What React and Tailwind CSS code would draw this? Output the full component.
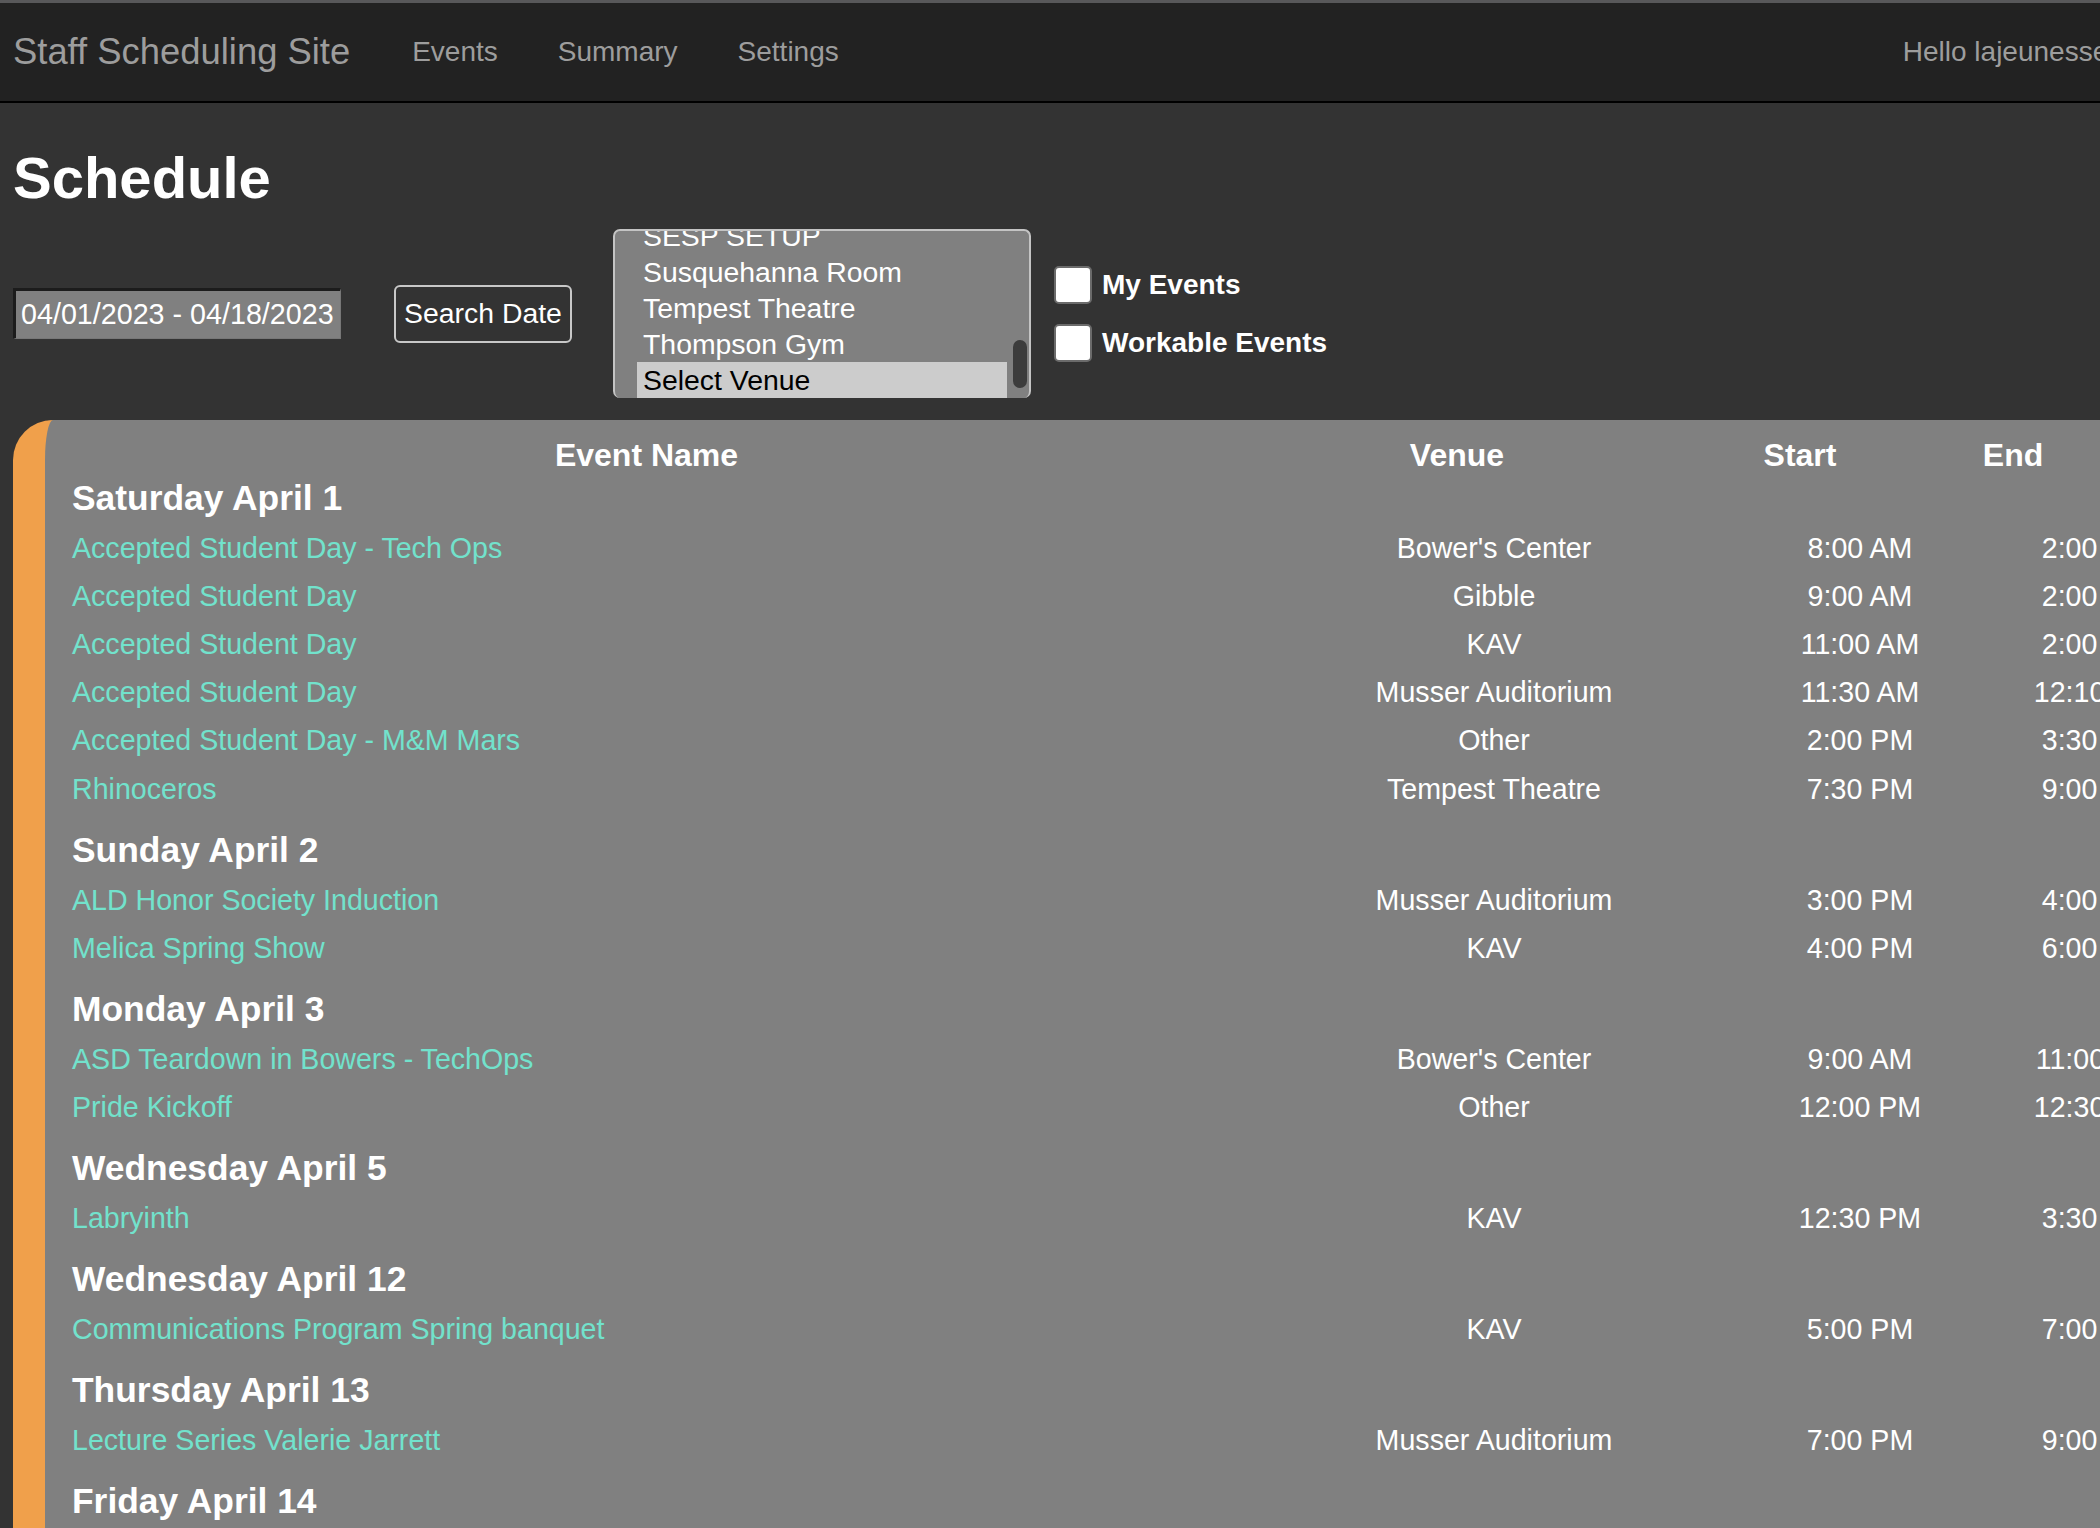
import React from "react";

const days = [
  {
    day: "Saturday April 1",
    events: [
      ["Accepted Student Day - Tech Ops", "Bower's Center", "8:00 AM", "2:00 PM"],
      ["Accepted Student Day", "Gibble", "9:00 AM", "2:00 PM"],
      ["Accepted Student Day", "KAV", "11:00 AM", "2:00 PM"],
      ["Accepted Student Day", "Musser Auditorium", "11:30 AM", "12:10 PM"],
      ["Accepted Student Day - M&M Mars", "Other", "2:00 PM", "3:30 PM"],
      ["Rhinoceros", "Tempest Theatre", "7:30 PM", "9:00 PM"],
    ],
  },
  {
    day: "Sunday April 2",
    events: [
      ["ALD Honor Society Induction", "Musser Auditorium", "3:00 PM", "4:00 PM"],
      ["Melica Spring Show", "KAV", "4:00 PM", "6:00 PM"],
    ],
  },
  {
    day: "Monday April 3",
    events: [
      ["ASD Teardown in Bowers - TechOps", "Bower's Center", "9:00 AM", "11:00 AM"],
      ["Pride Kickoff", "Other", "12:00 PM", "12:30 PM"],
    ],
  },
  {
    day: "Wednesday April 5",
    events: [["Labryinth", "KAV", "12:30 PM", "3:30 PM"]],
  },
  {
    day: "Wednesday April 12",
    events: [["Communications Program Spring banquet", "KAV", "5:00 PM", "7:00 PM"]],
  },
  {
    day: "Thursday April 13",
    events: [["Lecture Series Valerie Jarrett", "Musser Auditorium", "7:00 PM", "9:00 PM"]],
  },
  { day: "Friday April 14", events: [] },
];

const venues = ["SESP SETUP", "Susquehanna Room", "Tempest Theatre", "Thompson Gym", "Select Venue"];

export default function App() {
  return (
    <div className="w-[2100px] h-[1528px] overflow-hidden bg-[#333333] font-['Liberation_Sans',Arial,sans-serif] text-white">
      <div className="w-[2200px]">
        {/* Navbar */}
        <nav className="h-[103px] bg-[#222222] border-t-[3px] border-t-[#58585a] border-b-2 border-b-black flex items-center pl-[13px]">
          <span className="text-[36.4px] text-[#9d9d9d] leading-none">Staff Scheduling Site</span>
          <div className="flex ml-[62px] gap-[60px] text-[28px] text-[#9d9d9d] leading-none">
            <span>Events</span>
            <span>Summary</span>
            <span>Settings</span>
          </div>
          <span className="ml-auto mr-[84px] text-[28px] text-[#9d9d9d] leading-none">Hello lajeunesse!</span>
        </nav>

        {/* Page header */}
        <div className="pl-[13px]">
          <h1 className="mt-[42px] text-[58px] font-bold leading-[66px]">Schedule</h1>

          <div className="mt-[18px] flex items-center">
            <div className="w-[328px] h-[51px] bg-[#808080] border-t-[3px] border-l-[3px] border-[#1c1c1c] border-r border-b border-r-[#777] border-b-[#777] flex items-center pl-[5px] text-[28.7px] leading-none">
              04/01/2023 - 04/18/2023
            </div>

            <button className="ml-[53px] w-[178px] h-[58px] border-2 border-[#c8c8c8] rounded-[6px] text-[28.4px] leading-none text-white">
              Search Date
            </button>

            <div className="relative ml-[41px] w-[418px] h-[169px] bg-[#808080] border-2 border-b-0 border-[#c4c4c4] rounded-[7px] overflow-hidden flex flex-col justify-end pl-[22px] pr-[22px]">
              {venues.map((v) => (
                <div
                  key={v}
                  className={`h-[36px] shrink-0 flex items-center px-[6px] text-[28.4px] leading-none ${
                    v === "Select Venue" ? "bg-[#cccccc] text-black" : "text-white"
                  }`}
                >
                  {v}
                </div>
              ))}
              <div className="absolute right-[2px] top-[109px] w-[14px] h-[48px] rounded-full bg-[#3c3c3c]"></div>
            </div>

            <div className="ml-[23px] flex flex-col gap-[20px]">
              <label className="flex items-center gap-[10px] h-[38px]">
                <span className="w-[38px] h-[38px] bg-white border-2 border-[#6b6b6b] rounded-[5px]"></span>
                <span className="text-[28px] font-bold leading-none">My Events</span>
              </label>
              <label className="flex items-center gap-[10px] h-[38px]">
                <span className="w-[38px] h-[38px] bg-white border-2 border-[#6b6b6b] rounded-[5px]"></span>
                <span className="text-[28px] font-bold leading-none">Workable Events</span>
              </label>
            </div>
          </div>

          {/* Schedule table */}
          <div className="mt-[22px] bg-[#808080] border-l-[32px] border-l-[#f0a04b] rounded-tl-[40px] pt-[17px] pb-[40px]">
            <div className="grid grid-cols-[1203px_418px_268px_158px] h-[36px] items-center text-[32px] font-bold leading-none">
              <div className="text-center">Event Name</div>
              <div className="text-center">Venue</div>
              <div className="text-center">Start</div>
              <div className="text-center">End</div>
            </div>

            {days.map((d, i) => (
              <div key={d.day}>
                <div className={`h-[50.8px] flex items-center pl-[27px] text-[35.4px] font-bold leading-none ${i > 0 ? "mt-[12px]" : ""}`}>
                  {d.day}
                </div>
                {d.events.map((e, j) => (
                  <div
                    key={j}
                    className="grid grid-cols-[1249px_400px_332px_138px] h-[48.2px] items-center text-[28.6px] leading-none"
                  >
                    <div className="pl-[27px] text-[#72e2cc]">{e[0]}</div>
                    <div className="text-center whitespace-nowrap">{e[1]}</div>
                    <div className="text-center whitespace-nowrap">{e[2]}</div>
                    <div className="text-center whitespace-nowrap">{e[3]}</div>
                  </div>
                ))}
              </div>
            ))}
          </div>
        </div>
      </div>
    </div>
  );
}
